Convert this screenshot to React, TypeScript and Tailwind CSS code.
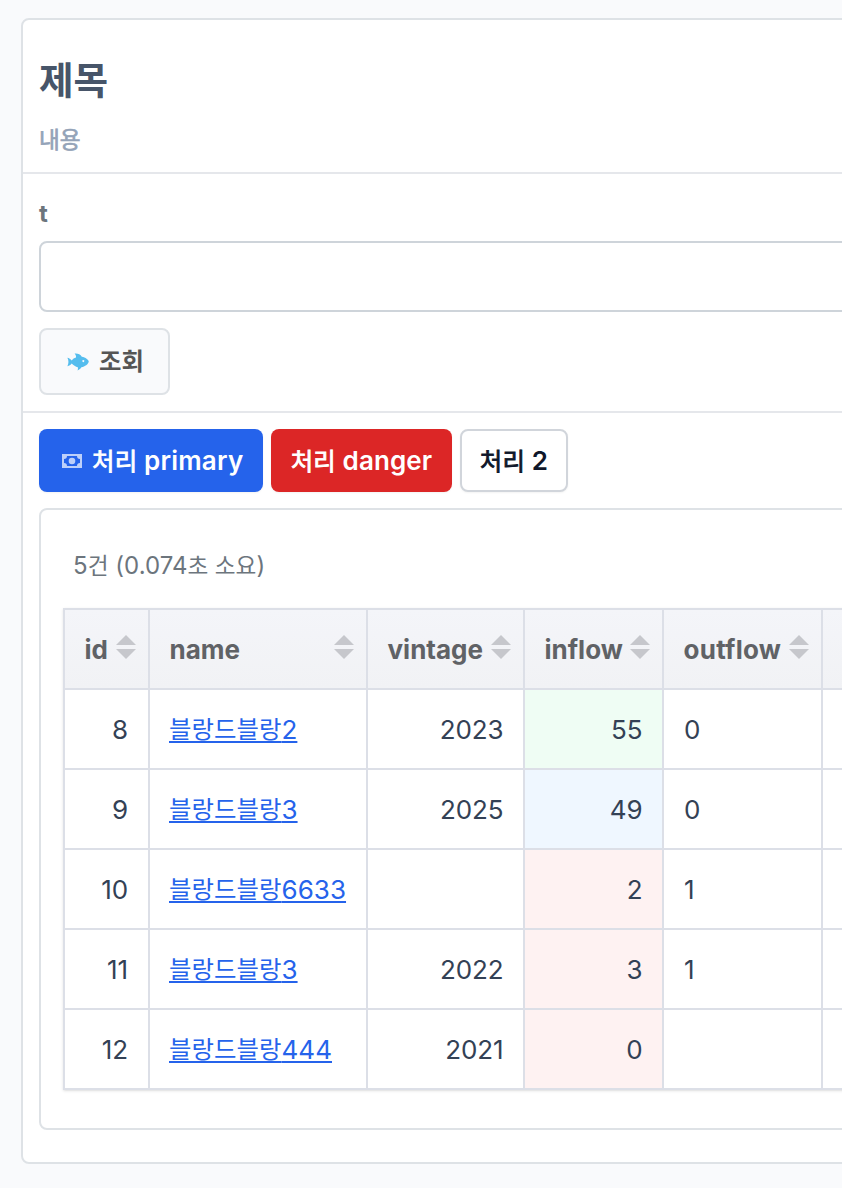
import React from "react";

const rows = [
  { id: "8", name: "2", vintage: "2023", inflow: "55", tone: "bg-[#effdf4]", outflow: "0" },
  { id: "9", name: "3", vintage: "2025", inflow: "49", tone: "bg-[#eff7ff]", outflow: "0" },
  { id: "10", name: "6633", vintage: "", inflow: "2", tone: "bg-[#fef2f2]", outflow: "1" },
  { id: "11", name: "3", vintage: "2022", inflow: "3", tone: "bg-[#fef2f2]", outflow: "1" },
  { id: "12", name: "444", vintage: "2021", inflow: "0", tone: "bg-[#fef2f2]", outflow: "" },
];

const columns = [
  { label: "id", spacing: "" },
  { label: "name", spacing: "" },
  { label: "vintage", spacing: "" },
  { label: "inflow", spacing: "" },
  { label: "outflow", spacing: "tracking-[0.25px]" },
  { label: "", spacing: "" },
];

function FishIcon() {
  return (
    <svg width="22" height="18" viewBox="0 0 22 18" className="shrink-0">
      <path
        fill="#55bdee"
        fillRule="evenodd"
        d="M0.4 4.8 C2 5 3.6 6.2 4.7 7.4 C5.8 6 7.2 5 9 4.5 C9.2 3.2 8.8 1.7 7.6 .6 C10.6 .3 13.4 1.2 14.8 3.7 C18.6 4.3 21.5 6.6 21.8 8.6 C21.2 11.4 18 13.7 14.4 14.3 C13.6 15.6 12.4 16.8 10.6 17.4 C11 16 11 15 10.8 14.2 C8.6 13.7 6.4 12.4 4.7 10.5 C3.6 11.8 2.3 12.8 .4 13.2 C1.8 10.4 1.8 7.6 .4 4.8 Z M16.3 7 a1 1 0 1 0 .01 0 Z"
      />
    </svg>
  );
}

function CashIcon() {
  return (
    <svg width="20" height="14" viewBox="0 0 20 14" className="shrink-0">
      <path
        fill="#bdd0fa"
        fillRule="evenodd"
        d="M0 0 H20 V14 H0 Z M5 2 A3 3 0 0 1 2 5 V9 A3 3 0 0 1 5 12 H15 A3 3 0 0 1 18 9 V5 A3 3 0 0 1 15 2 Z"
      />
      <circle cx="10" cy="7" r="3.3" fill="#bdd0fa" />
    </svg>
  );
}

function SortIcon() {
  return (
    <svg width="20" height="24" viewBox="0 0 20 24" className="block shrink-0" fill="#c6c7cc">
      <path d="M10 0 L20 10 H0 Z" />
      <path d="M0 14 H20 L10 24 Z" />
    </svg>
  );
}

function ActionLabel() {
  return <span className="text-[24.4px] font-normal [-webkit-text-stroke:0.8px_currentColor]">처리</span>;
}

export default function App() {
  return (
    <div className="h-[1188px] w-full overflow-hidden bg-[#f9fafc] pl-[21px] pt-[18px] font-['Inter','Noto_Sans_CJK_KR',sans-serif]">
      <main className="h-[1146px] w-[1000px] rounded-lg border-2 border-[#dee2e6] bg-white">
        <header className="h-[154px] border-b-2 border-[#e5e7eb] px-4 pt-[37px]">
          <h1 className="text-[37.6px] leading-[48px] font-bold text-[#475569]">제목</h1>
          <p className="mt-[15px] text-[22.6px] leading-[40px] text-[#94a3b8] [-webkit-text-stroke:0.7px_currentColor]">내용</p>
        </header>

        <section className="h-[239px] border-b-2 border-[#e5e7eb] px-4 pt-[24px]">
          <label className="block h-[43px] text-[24px] leading-[32px] font-bold text-[#6c757d]" htmlFor="t">
            t
          </label>
          <input id="t" className="block h-[71px] w-full rounded-lg border-2 border-[#ced4da] bg-white px-4 outline-none" />
          <button className="mt-4 flex h-[67px] w-[131px] items-center rounded-lg border-2 border-[#dee2e6] bg-[#f9fafc] pl-[26px] text-[24.4px] font-bold text-[#555]">
            <FishIcon />
            <span className="ml-[10px] pb-px leading-[36px] whitespace-nowrap">조회</span>
          </button>
        </section>

        <section className="px-4 pt-4">
          <div className="flex gap-2 text-[26px] font-semibold whitespace-nowrap">
            <button className="flex h-[63px] w-[224px] items-center rounded-lg bg-[#2563eb] pl-[23px] text-white shadow-xs">
              <CashIcon />
              <span className="ml-[10px] pt-px leading-[36px] tracking-[0.2px]">
                <ActionLabel /> primary
              </span>
            </button>
            <button className="h-[63px] w-[181px] rounded-lg bg-[#dc2626] pt-px leading-[36px] tracking-[0.1px] text-white shadow-xs">
              <ActionLabel /> danger
            </button>
            <button className="h-[63px] w-[108px] rounded-lg border-2 border-[#d1d5db] bg-white pt-px leading-[36px] tracking-[0.2px] text-[#0f172a] shadow-xs">
              <ActionLabel /> 2
            </button>
          </div>

          <div className="mt-4 h-[622px] rounded-lg border-2 border-[#dee2e6] px-[22px] pt-[34px]">
            <p className="h-[64px] pl-[10px] text-[24px] leading-[44px] tracking-[0.05px] text-[#6c757d]">
              5<span className="text-[22.6px]">건</span> (0.074<span className="text-[22.6px]">초 소요</span>)
            </p>
            <table className="w-[938px] table-fixed border-collapse border-2 border-[#dcdfe7] shadow-sm">
              <colgroup>
                <col className="w-[85px]" />
                <col className="w-[218px]" />
                <col className="w-[157px]" />
                <col className="w-[139px]" />
                <col className="w-[159px]" />
                <col />
              </colgroup>
              <thead>
                <tr className="h-[80px] bg-linear-to-b from-[#f4f5f9] to-[#f1f2f5]">
                  {columns.map((column) => (
                    <th key={column.label} className="border-2 border-[#dcdfe7] py-0 pr-3 pl-[19.5px] text-[26px] font-bold text-[#606266]">
                      {column.label && (
                        <div className="flex items-center justify-between">
                          <span className={column.spacing}>{column.label}</span>
                          <span className="-mt-1">
                            <SortIcon />
                          </span>
                        </div>
                      )}
                    </th>
                  ))}
                </tr>
              </thead>
              <tbody className="text-[26px] leading-[40px] tracking-[-0.1px] text-[#334155]">
                {rows.map((row) => (
                  <tr key={row.id} className="h-[80px]">
                    <td className="border-2 border-[#dcdfe7] px-5 pt-0.5 pb-0 text-right">{row.id}</td>
                    <td className="border-2 border-[#dcdfe7] pt-0.5 pr-5 pb-0 pl-[19px] tracking-[0.05px] whitespace-nowrap">
                      <a href="#" className="text-[#2563eb] underline decoration-2 underline-offset-2 [text-decoration-skip-ink:none]">
                        <span className="align-[1px] text-[24.4px] leading-none">블랑드블랑</span>
                        {row.name}
                      </a>
                    </td>
                    <td className="border-2 border-[#dcdfe7] pt-0.5 pr-[19.5px] pb-0 pl-5 text-right">{row.vintage}</td>
                    <td className={"border-2 border-[#dcdfe7] pt-0.5 pr-[19.5px] pb-0 pl-5 text-right " + row.tone}>{row.inflow}</td>
                    <td className="border-2 border-[#dcdfe7] px-5 pt-0.5 pb-0">{row.outflow}</td>
                    <td className="border-2 border-[#dcdfe7]" />
                  </tr>
                ))}
              </tbody>
            </table>
          </div>
        </section>
      </main>
    </div>
  );
}
